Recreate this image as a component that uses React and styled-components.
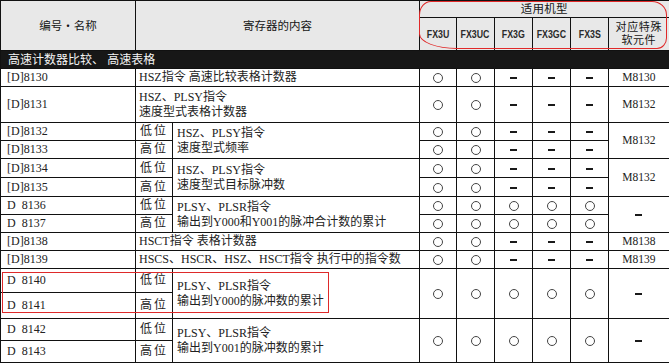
import React from 'react';
import styled, { createGlobalStyle } from 'styled-components';

const Global = createGlobalStyle`
  html, body { margin: 0; padding: 0; background: #fff; }
  body { font-family: "Liberation Serif", "Noto Sans CJK SC", serif; color: #222; }
`;

const Wrap = styled.div`
  position: relative;
  width: 671px;
  height: 363px;
  overflow: hidden;
`;

const Table = styled.table`
  border-collapse: collapse;
  table-layout: fixed;
  width: 668px;
`;

const Row = styled.tr`
  height: ${(p) => p.$h}px;
`;

const HeadCell = styled.th`
  background: #e8e8e8;
  border: 1px solid #111;
  padding: 0;
  font-family: "Liberation Sans", "Noto Sans CJK SC", sans-serif;
  font-weight: 400;
  font-size: ${(p) => p.$fs || 12}px;
  line-height: ${(p) => p.$lh || 14}px;
  letter-spacing: ${(p) => p.$ls || 0}px;
  color: #151515;
  text-align: center;
  vertical-align: middle;
  &:last-child { border-right: none; }
`;

const ModelLabel = styled.span`
  display: inline-block;
  font-family: "Liberation Sans", "DejaVu Sans", sans-serif;
  font-size: 11px;
  font-weight: 700;
  color: #2a2a2a;
  transform: scaleX(0.8);
  letter-spacing: 0;
`;

const SectionCell = styled.td`
  background: #171717;
  color: #f4f4f4;
  border: 1px solid #111;
  border-right: none;
  padding: 0 0 0 7px;
  font-family: "Liberation Sans", "Noto Sans CJK SC", sans-serif;
  font-size: 12px;
  line-height: 14px;
  letter-spacing: 0;
  text-align: left;
  vertical-align: middle;
  white-space: nowrap;
`;

const SectionText = styled.span`
  display: inline-block;
  width: 141px;
  text-align: justify;
  text-align-last: justify;
`;

const Cell = styled.td`
  border: 1px solid #111;
  padding: 0 0 0 ${(p) => p.$pl ?? 0}px;
  font-size: ${(p) => p.$fs || 12}px;
  line-height: 15px;
  letter-spacing: ${(p) => p.$ls || 0}px;
  text-align: ${(p) => p.$align || 'left'};
  vertical-align: middle;
  white-space: nowrap;
  overflow: hidden;
  &:last-child { border-right: none; }
`;

const Circle = styled.span`
  display: inline-block;
  width: 8px;
  height: 8px;
  border: 1px solid #444;
  border-radius: 50%;
  vertical-align: middle;
`;

const Dash = styled.span`
  display: inline-block;
  width: 7px;
  height: 2px;
  background: #1a1a1a;
  vertical-align: middle;
`;

const Ring = styled.div`
  position: absolute;
  left: 419px;
  top: 1px;
  width: 246px;
  height: 46px;
  border: 1px solid #e02828;
  border-radius: 12px 15px 10px 38px / 14px 14px 11px 15px;
  pointer-events: none;
`;

const Box = styled.div`
  position: absolute;
  left: 2px;
  top: 272px;
  width: 325px;
  height: 39px;
  border: 1px solid #de2a2a;
  pointer-events: none;
`;

const Mark = ({ v }) => (v === 'o' ? <Circle /> : <Dash />);

const Lines = ({ lines }) =>
  (Array.isArray(lines) ? lines : [lines]).map((l, i) => <div key={i}>{l}</div>);

const A = ['o', 'o', '-', '-', '-'];
const B = ['o', 'o', 'o', 'o', 'o'];

const rows = [
  { kind: 'single', h: 18, code: '[D]8130', content: 'HSZ指令 高速比较表格计数器', models: A, special: 'M8130' },
  { kind: 'single', h: 36, code: '[D]8131', content: ['HSZ、PLSY指令', '速度型式表格计数器'], models: A, special: 'M8132' },
  { kind: 'pair', hs: [18, 18], codes: ['[D]8132', '[D]8133'], content: ['HSZ、PLSY指令', '速度型式频率'], models: [A, A], special: 'M8132' },
  { kind: 'pair', hs: [19, 19], codes: ['[D]8134', '[D]8135'], content: ['HSZ、PLSY指令', '速度型式目标脉冲数'], models: [A, A], special: 'M8132' },
  { kind: 'pair', hs: [18, 18], codes: ['D\u00a0\u00a08136', 'D\u00a0\u00a08137'], content: ['PLSY、PLSR指令', '输出到Y000和Y001的脉冲合计数的累计'], models: [B, B], special: '-' },
  { kind: 'single', h: 18, code: '[D]8138', content: 'HSCT指令 表格计数器', models: A, special: 'M8138' },
  { kind: 'single', h: 18, code: '[D]8139', content: 'HSCS、HSCR、HSZ、HSCT指令 执行中的指令数', models: A, special: 'M8139' },
  { kind: 'pair', hs: [24, 26], codes: ['D\u00a0\u00a08140', 'D\u00a0\u00a08141'], content: ['PLSY、PLSR指令', '输出到Y000的脉冲数的累计'], models: B, special: '-' },
  { kind: 'pair', hs: [22, 22], codes: ['D\u00a0\u00a08142', 'D\u00a0\u00a08143'], content: ['PLSY、PLSR指令', '输出到Y001的脉冲数的累计'], models: B, special: '-' },
];

const Special = ({ v, rowSpan }) => (
  <Cell $align="center" $fs={11.5} rowSpan={rowSpan}>
    {v === '-' ? <Dash /> : v}
  </Cell>
);

const SingleRow = ({ r }) => (
  <Row $h={r.h}>
    <Cell $pl={6}>{r.code}</Cell>
    <Cell colSpan={2} $pl={3}><Lines lines={r.content} /></Cell>
    {r.models.map((m, i) => (
      <Cell key={i} $align="center"><Mark v={m} /></Cell>
    ))}
    <Special v={r.special} />
  </Row>
);

const PairRows = ({ r }) => {
  const split = Array.isArray(r.models[0]);
  return (
    <>
      <Row $h={r.hs[0]}>
        <Cell $pl={6}>{r.codes[0]}</Cell>
        <Cell $align="center" $ls={2}>低位</Cell>
        <Cell rowSpan={2} $pl={4}><Lines lines={r.content} /></Cell>
        {(split ? r.models[0] : r.models).map((m, i) => (
          <Cell key={i} $align="center" rowSpan={split ? 1 : 2}><Mark v={m} /></Cell>
        ))}
        <Special v={r.special} rowSpan={2} />
      </Row>
      <Row $h={r.hs[1]}>
        <Cell $pl={6}>{r.codes[1]}</Cell>
        <Cell $align="center" $ls={2}>高位</Cell>
        {split && r.models[1].map((m, i) => (
          <Cell key={i} $align="center"><Mark v={m} /></Cell>
        ))}
      </Row>
    </>
  );
};

export default function App() {
  return (
    <Wrap>
      <Global />
      <Table>
        <colgroup>
          <col style={{ width: 135 }} />
          <col style={{ width: 37 }} />
          <col style={{ width: 247 }} />
          <col style={{ width: 37 }} />
          <col style={{ width: 38 }} />
          <col style={{ width: 38 }} />
          <col style={{ width: 38 }} />
          <col style={{ width: 38 }} />
          <col style={{ width: 60 }} />
        </colgroup>
        <tbody>
          <Row $h={17}>
            <HeadCell rowSpan={2} $fs={11.5}>编号・名称</HeadCell>
            <HeadCell rowSpan={2} colSpan={2} $fs={11.5}>寄存器的内容</HeadCell>
            <HeadCell colSpan={6} $fs={11.5} $ls={0.3}>适用机型</HeadCell>
          </Row>
          <Row $h={33}>
            <HeadCell><ModelLabel>FX3U</ModelLabel></HeadCell>
            <HeadCell><ModelLabel>FX3UC</ModelLabel></HeadCell>
            <HeadCell><ModelLabel>FX3G</ModelLabel></HeadCell>
            <HeadCell><ModelLabel>FX3GC</ModelLabel></HeadCell>
            <HeadCell><ModelLabel>FX3S</ModelLabel></HeadCell>
            <HeadCell $fs={11} $lh={13} $ls={0.6}>对应特殊<br />软元件</HeadCell>
          </Row>
          <Row $h={18}>
            <SectionCell colSpan={9}>
              <SectionText>高速计数器比较、 高速表格</SectionText>
            </SectionCell>
          </Row>
          {rows.map((r, i) =>
            r.kind === 'single' ? <SingleRow key={i} r={r} /> : <PairRows key={i} r={r} />
          )}
        </tbody>
      </Table>
      <Ring />
      <Box />
    </Wrap>
  );
}
